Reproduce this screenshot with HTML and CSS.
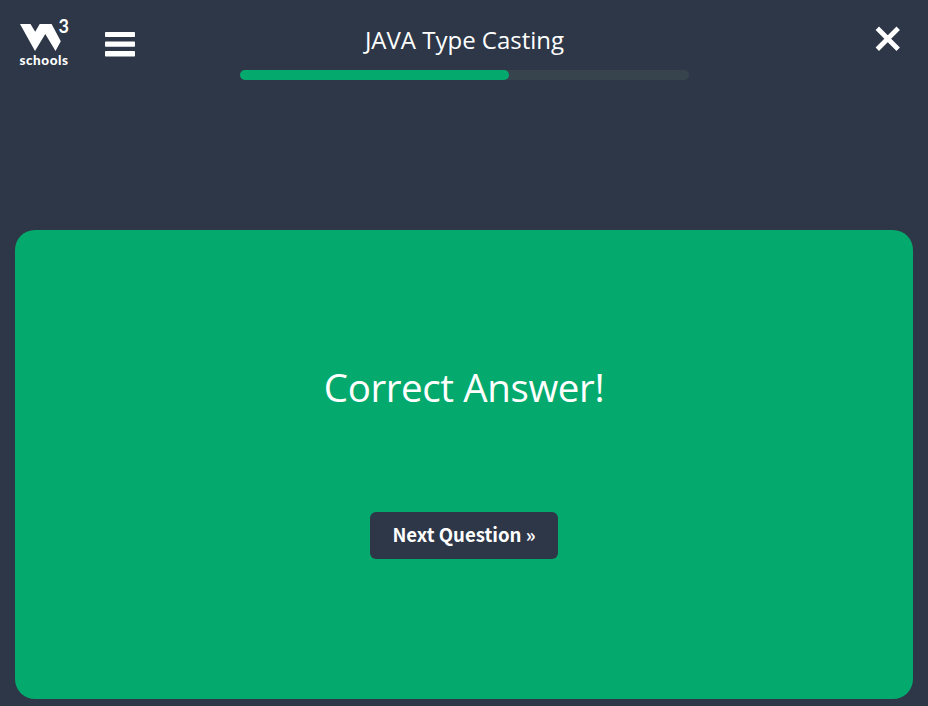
FILE: index.html
```html
<!DOCTYPE html>
<html lang="en">
<head>
<meta charset="utf-8">
<title>JAVA Type Casting</title>
<link rel="stylesheet" href="styles.css">
</head>
<body>
<header class="topbar">
  <div class="topbar-left">
    <a class="logo" aria-label="schools">
      <svg class="logo-mark" width="50" height="32" viewBox="0 0 50 32">
        <path d="M0 4H10.5L15.2 11.8L19.7 4H31.6L40.8 21.3L35.5 31L25.3 14L15 31Z" fill="#fff"/>
        <text class="logo-three" x="38.5" y="13.2">3</text>
      </svg>
      <span class="logo-name">schools</span>
    </a>
    <svg class="menu-icon" width="30" height="25" viewBox="0 0 30 25" fill="#fff">
      <rect width="30" height="5" rx=".7"/><rect y="9.5" width="30" height="5.3" rx=".7"/><rect y="19" width="30" height="5.5" rx=".7"/>
    </svg>
  </div>
  <div class="progress-area">
    <h1 class="quiz-title">JAVA Type Casting</h1>
    <div class="progress"><div class="progress-fill"></div></div>
  </div>
  <div class="topbar-right">
    <svg class="close-icon" width="26" height="26" viewBox="0 0 26 26"><path d="M2.3 2.3L23.2 23.2M23.2 2.3L2.3 23.2" stroke="#fff" stroke-width="4.8"/></svg>
  </div>
</header>
<main class="result">
  <h2 class="result-title">Correct Answer!</h2>
  <button class="next">Next Question »</button>
</main>
</body>
</html>
```
FILE: styles.css
```css
* { box-sizing: border-box; }
body {
  margin: 0;
  height: 706px;
  padding: 0 15px;
  background: #2d3748;
  color: #fff;
  font-family: "Open Sans", "Noto Sans", sans-serif;
  overflow: hidden;
}
.topbar {
  display: grid;
  grid-template-columns: 225px 449px 1fr;
  height: 230px;
}
.topbar-left {
  display: flex;
  align-items: flex-start;
  padding: 20px 0 0 5px;
}
.logo { width: 50px; }
.logo-mark { display: block; overflow: visible; }
.logo-three { font: 700 18px Lato, sans-serif; fill: #fff; }
.logo-name {
  display: block;
  margin-left: -.5px;
  font: 900 13.5px/16px Lato, sans-serif;
  letter-spacing: .55px;
  white-space: nowrap;
}
.menu-icon { margin: 12px 0 0 35.4px; }
.quiz-title {
  margin: 22px 0 0;
  font-size: 24px;
  font-weight: 400;
  line-height: 36px;
  text-align: center;
  white-space: nowrap;
}
.progress {
  height: 10px;
  margin-top: 12px;
  border-radius: 5px;
  background: #38444d;
}
.progress-fill {
  width: 60%;
  height: 100%;
  border-radius: 5px;
  background: #04aa6d;
}
.topbar-right {
  display: flex;
  justify-content: flex-end;
  padding: 26.4px 12px 0 0;
}
.result {
  display: flex;
  flex-direction: column;
  align-items: center;
  height: 469px;
  border-radius: 20px;
  background: #04aa6d;
}
.result-title {
  margin: 127px 0 0;
  font-size: 38.5px;
  font-weight: 400;
  line-height: 60px;
  letter-spacing: -.4px;
  white-space: nowrap;
}
.next {
  width: 188px;
  height: 47px;
  margin-top: 95px;
  padding: 0 0 3px;
  border: 0;
  border-radius: 6px;
  background: #2d3748;
  color: #fff;
  font: 700 18.6px/44px "Noto Sans CJK SC", sans-serif;
  white-space: nowrap;
}
```
